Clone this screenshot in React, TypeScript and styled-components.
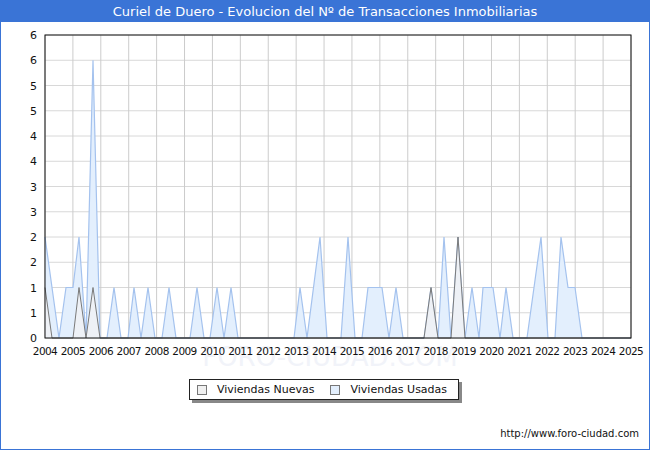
import React, { FC } from 'react';
import styled, { createGlobalStyle } from 'styled-components';

const GlobalStyle = createGlobalStyle`
  html, body { margin: 0; padding: 0; background: #fff; }
  body { font-family: 'DejaVu Sans', Verdana, sans-serif; }
`;

const StFrame = styled.div`
  width: 650px;
  height: 450px;
  box-sizing: border-box;
  border: 1px solid #3a74d6;
  display: flex;
  flex-direction: column;
  overflow: hidden;
`;

const StTitle = styled.div`
  height: 21px;
  background: #3a74d6;
  color: #fff;
  font-size: 13px;
  display: flex;
  align-items: center;
  justify-content: center;
  flex-shrink: 0;
`;

const StChart = styled.svg`
  display: block;
  flex-shrink: 0;
`;

const StLegendRow = styled.div`
  display: flex;
  justify-content: center;
  padding: 7px 0 0 0;
  margin-left: -2px;
`;

const StLegend = styled.div`
  display: flex;
  align-items: center;
  gap: 16px;
  height: 19px;
  padding: 0 11px 0 7px;
  border: 1px solid #222;
  box-shadow: 3px 3px 0 #888;
  font-size: 11px;
  color: #111;
`;

const StItem = styled.span`
  display: inline-flex;
  align-items: center;
  gap: 10px;
`;

const StSwatch = styled.span<{ $color: string }>`
  width: 8px;
  height: 8px;
  border: 1px solid #777;
  background: ${({ $color }) => $color};
`;

const StFooter = styled.div`
  margin-top: auto;
  padding: 0 10px 10px 0;
  text-align: right;
  font-size: 10px;
  color: #111;
`;

const X0 = 45;
const X1 = 631;
const Y0 = 338;
const UNIT = (338 - 35) / 12;
const years = Array.from({ length: 22 }, (_, i) => 2004 + i);
const yLabels = ['0', '1', '1', '2', '2', '3', '3', '4', '4', '5', '5', '6', '6'];

const usadas: [number, number][] = [
  [45, 4], [59, 0], [66, 2], [73, 2], [79, 4], [86, 0], [93, 11], [100, 0], [107, 0], [114, 2], [121, 0],
  [128, 0], [134, 2], [141, 0], [148, 2], [155, 0], [162, 0], [169, 2], [176, 0], [190, 0], [197, 2],
  [204, 0], [210, 0], [217, 2], [224, 0], [231, 2], [238, 0], [294, 0], [300, 2], [307, 0], [320, 4],
  [327, 0], [341, 0], [348, 4], [355, 0], [362, 0], [368, 2], [382, 2], [389, 0], [396, 2], [403, 0],
  [424, 0], [431, 2], [438, 0], [444, 4], [451, 0], [458, 4], [465, 0], [472, 2], [479, 0], [483, 2],
  [493, 2], [500, 0], [506, 2], [513, 0], [527, 0], [541, 4], [548, 0], [555, 0], [561, 4], [568, 2],
  [575, 2], [582, 0], [631, 0],
];

const nuevas: [number, number][] = [
  [45, 2], [52, 0], [73, 0], [79, 2], [86, 0], [93, 2], [100, 0], [424, 0], [431, 2], [438, 0],
  [451, 0], [458, 4], [465, 0], [631, 0],
];

const toPts = (d: [number, number][]) => d.map(([x, u]) => `${x},${Y0 - u * UNIT}`).join(' ');
const area = (d: [number, number][]) => `${X0},${Y0} ${toPts(d)} ${X1},${Y0}`;
const yearX = (i: number) => X0 + ((X1 - X0) / 21) * i;

const Chart: FC = () => (
  <StChart width={648} height={350} viewBox="1 22 648 350">
    <text x={330} y={366} fontSize={26} fill="#f1f3f9" textAnchor="middle" fontFamily="DejaVu Sans">
      FORO-CIUDAD.COM
    </text>
    {yLabels.map((_, i) => (
      <line key={'h' + i} x1={X0} x2={X1} y1={Y0 - i * UNIT} y2={Y0 - i * UNIT} stroke="#d8d8d8" />
    ))}
    {years.map((y, i) => (
      <line key={'v' + y} x1={yearX(i)} x2={yearX(i)} y1={35} y2={Y0} stroke="#cccccc" />
    ))}
    <polygon points={area(usadas)} fill="#e3effd" />
    <polyline points={toPts(usadas)} fill="none" stroke="#a4c2ee" strokeWidth={1.2} />
    <polygon points={area(nuevas)} fill="#f2f2f2" fillOpacity={0.7} />
    <polyline points={toPts(nuevas)} fill="none" stroke="#7a7a7a" strokeWidth={1} />
    <rect x={X0} y={35} width={X1 - X0} height={Y0 - 35} fill="none" stroke="#111" strokeWidth={1} />
    {yLabels.map((l, i) => (
      <text key={'yl' + i} x={37} y={Y0 - i * UNIT + 4} fontSize={11} textAnchor="end" fill="#111" fontFamily="DejaVu Sans">
        {l}
      </text>
    ))}
    {years.map((y, i) => (
      <text key={'xl' + y} x={yearX(i)} y={355} fontSize={10.5} textAnchor="middle" fill="#111" fontFamily="DejaVu Sans" letterSpacing={-0.6}>
        {y}
      </text>
    ))}
  </StChart>
);

const App: FC = () => (
  <>
    <GlobalStyle />
    <StFrame>
      <StTitle>Curiel de Duero - Evolucion del Nº de Transacciones Inmobiliarias</StTitle>
      <Chart />
      <StLegendRow>
        <StLegend>
          <StItem><StSwatch $color="#f0f0f0" />Viviendas Nuevas</StItem>
          <StItem><StSwatch $color="#e3effd" />Viviendas Usadas</StItem>
        </StLegend>
      </StLegendRow>
      <StFooter>http://www.foro-ciudad.com</StFooter>
    </StFrame>
  </>
);

export default App;
